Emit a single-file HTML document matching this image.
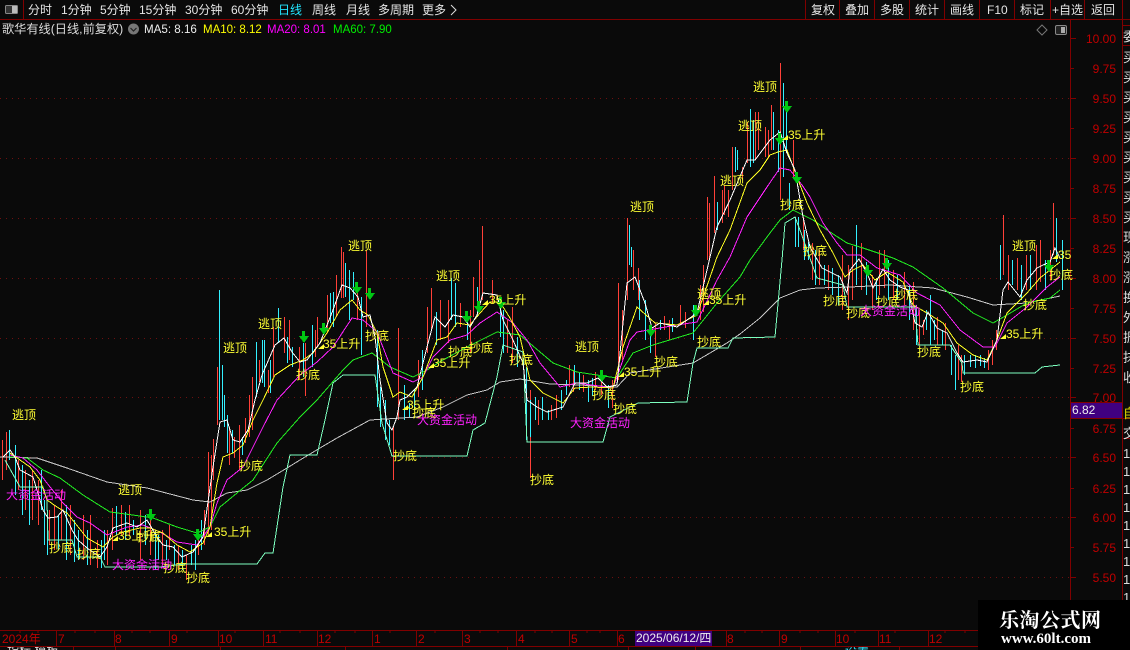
<!DOCTYPE html>
<html><head><meta charset="utf-8"><style>
html,body{margin:0;padding:0;background:#0a0a0a;width:1130px;height:650px;overflow:hidden}
svg{display:block}
text{font-family:"Liberation Sans","Noto Sans CJK SC",sans-serif}
.m{fill:#e6e6e6;font-size:12px}
.a{fill:#c00000;font-size:12px;text-anchor:end}
.d{fill:#c00000;font-size:12px}
.y{fill:#ffff33;font-size:12px}
.p{fill:#ff22ff;font-size:12px}
.r{fill:#e8e8e8;font-size:13px}
polyline{fill:none;stroke-width:1;shape-rendering:crispEdges}
</style></head><body>
<svg width="1130" height="650" viewBox="0 0 1130 650" xmlns="http://www.w3.org/2000/svg">
<rect width="1130" height="650" fill="#0a0a0a"/>
<!-- grid -->
<g stroke="#6e1010" stroke-width="1" stroke-dasharray="1 5" shape-rendering="crispEdges">
<path d="M0 98.500H1070M0 158.500H1070M0 218.500H1070M0 278.500H1070M0 338.500H1070M0 397.500H1070M0 457.500H1070M0 517.500H1070M0 577.500H1070"/>
</g>
<!-- frame -->
<g stroke="#800000" stroke-width="1" shape-rendering="crispEdges" fill="none">
<path d="M0 19.500H1130M23.500 0V19M805.500 0V19M839.500 0V19M874.500 0V19M909.500 0V19M944.500 0V19M979.500 0V19M1014.500 0V19M1050.500 0V19M1084.500 0V19M1122.500 0V19"/>
<path d="M1070.500 19V630M1122.500 19V650M1122 25.500H1130M1122 45.500H1130M1071 402.500H1122M1071 418.500H1130M1122 438.500H1130"/>
<path d="M0 630.500H1130M0 646.500H1130"/>
<path d="M1070 38.500H1076M1070 68.500H1074M1070 98.500H1076M1070 128.500H1074M1070 158.500H1076M1070 188.500H1074M1070 218.500H1076M1070 248.500H1074M1070 278.500H1076M1070 308.500H1074M1070 338.500H1076M1070 368.500H1074M1070 397.500H1076M1070 428.500H1074M1070 457.500H1076M1070 488.500H1074M1070 517.500H1076M1070 547.500H1074M1070 577.500H1076"/>
<path d="M56.500 630V646M114.500 630V646M169.500 630V646M218.500 630V646M263.500 630V646M317.500 630V646M372.500 630V646M416.500 630V646M462.500 630V646M516.500 630V646M569.500 630V646M617.500 630V646M726.500 630V646M779.500 630V646M835.500 630V646M878.500 630V646M928.500 630V646"/>
<path d="M73.500 646V650M115.500 646V650M220.500 646V650M345.500 646V650M507.500 646V650M628.500 646V650M695.500 646V650M800.500 646V650M899.500 646V650"/>
<path d="M20 630V633M38 630V633M75 630V633M95 630V633M132 630V633M150 630V633M187 630V633M235 630V633M280 630V633M300 630V633M335 630V633M355 630V633M390 630V633M435 630V633M480 630V633M498 630V633M535 630V633M552 630V633M587 630V633M600 630V633M745 630V633M762 630V633M800 630V633M818 630V633M855 630V633M895 630V633M945 630V633M965 630V633"/>
</g>
<!-- top bar -->
<g class="m">
<text class="m" x="28" y="14">分时</text><text class="m" x="61" y="14">1分钟</text><text class="m" x="100" y="14">5分钟</text><text class="m" x="139" y="14">15分钟</text><text class="m" x="185" y="14">30分钟</text><text class="m" x="231" y="14">60分钟</text>
<text x="278" y="14" style="font-size:12px;fill:#22e6ff">日线</text>
<text class="m" x="312" y="14">周线</text><text class="m" x="346" y="14">月线</text><text class="m" x="378" y="14">多周期</text><text class="m" x="422" y="14">更多</text>
<text class="m" x="811" y="14">复权</text><text class="m" x="845" y="14">叠加</text><text class="m" x="880" y="14">多股</text><text class="m" x="915" y="14">统计</text><text class="m" x="950" y="14">画线</text><text class="m" x="987" y="14">F10</text><text class="m" x="1020" y="14">标记</text><text class="m" x="1052" y="14">+自选</text><text class="m" x="1091" y="14">返回</text>
</g>
<path d="M451 5L456 10L451 15" fill="none" stroke="#ddd"/>
<rect x="5.500" y="5.500" width="12" height="8" rx="1" fill="#333" stroke="#888"/><rect x="12" y="6" width="5" height="7" fill="#bbb"/>
<!-- second row -->
<text x="2" y="33" style="font-size:12.200px;fill:#dcdcdc">歌华有线(日线,前复权)</text>
<circle cx="133.500" cy="29" r="5.500" fill="#777"/><path d="M130.500 28L133.500 31L136.500 28" fill="none" stroke="#222" stroke-width="1.200"/>
<text x="144" y="33" style="font-size:11.600px;fill:#eee">MA5: 8.16</text>
<text x="203" y="33" style="font-size:11.500px;fill:#ffff00">MA10: 8.12</text>
<text x="267" y="33" style="font-size:11.500px;fill:#ff00ff">MA20: 8.01</text>
<text x="333" y="33" style="font-size:11.500px;fill:#00ee00">MA60: 7.90</text>
<path d="M1042 25L1047 30L1042 35L1037 30Z" fill="none" stroke="#777"/>
<rect x="1055.500" y="25.500" width="11" height="9" rx="1.500" fill="#222" stroke="#888"/><rect x="1061" y="27" width="4" height="6" fill="#aaa"/>
<!-- axis labels -->
<g>
<text class="a" x="1116" y="43">10.00</text><text class="a" x="1116" y="73">9.75</text><text class="a" x="1116" y="103">9.50</text><text class="a" x="1116" y="133">9.25</text><text class="a" x="1116" y="163">9.00</text><text class="a" x="1116" y="193">8.75</text><text class="a" x="1116" y="223">8.50</text><text class="a" x="1116" y="253">8.25</text><text class="a" x="1116" y="283">8.00</text><text class="a" x="1116" y="313">7.75</text><text class="a" x="1116" y="343">7.50</text><text class="a" x="1116" y="373">7.25</text><text class="a" x="1116" y="402">7.00</text><text class="a" x="1116" y="433">6.75</text><text class="a" x="1116" y="462">6.50</text><text class="a" x="1116" y="493">6.25</text><text class="a" x="1116" y="522">6.00</text><text class="a" x="1116" y="552">5.75</text><text class="a" x="1116" y="582">5.50</text>
</g>
<rect x="1071" y="403" width="51" height="15" fill="#400080"/>
<text x="1072" y="414" style="font-size:12px;fill:#eee">6.82</text>
<!-- right panel clipped -->
<svg x="1123" y="20" width="7" height="610" viewBox="0 0 7 610">
<g style="font-size:13px;fill:#ddd">
<text x="0" y="21">委</text><text x="0" y="42">买</text><text x="0" y="62">买</text><text x="0" y="82">买</text><text x="0" y="102">买</text><text x="0" y="122">买</text><text x="0" y="142">买</text><text x="0" y="162">买</text><text x="0" y="182">买</text><text x="0" y="202">买</text><text x="0" y="222">现</text><text x="0" y="242">涨</text><text x="0" y="262">涨</text><text x="0" y="282">换</text><text x="0" y="302">外</text><text x="0" y="322">振</text><text x="0" y="342">抹</text><text x="0" y="362">收</text>
<text x="0" y="398" style="fill:#dddd00">自</text><text x="0" y="418">交</text>
<text x="0" y="438">1</text><text x="0" y="456">1</text><text x="0" y="474">1</text><text x="0" y="492">1</text><text x="0" y="510">1</text><text x="0" y="528">1</text><text x="0" y="546">1</text><text x="0" y="564">1</text><text x="0" y="582">1</text>
</g></svg>
<!-- date axis -->
<text class="d" x="2" y="643">2024年</text><text class="d" x="58" y="643">7</text><text class="d" x="115" y="643">8</text><text class="d" x="171" y="643">9</text><text class="d" x="219" y="643">10</text><text class="d" x="265" y="643">11</text><text class="d" x="318" y="643">12</text><text class="d" x="374" y="643">1</text><text class="d" x="418" y="643">2</text><text class="d" x="464" y="643">3</text><text class="d" x="518" y="643">4</text><text class="d" x="571" y="643">5</text><text class="d" x="618" y="643">6</text><text class="d" x="727" y="643">8</text><text class="d" x="781" y="643">9</text><text class="d" x="836" y="643">10</text><text class="d" x="879" y="643">11</text><text class="d" x="929" y="643">12</text>
<rect x="635" y="631" width="77" height="15" fill="#400080"/>
<text x="636" y="642" style="font-size:12px;fill:#eee">2025/06/12/四</text>
<!-- candles red -->
<path stroke="#ff4038" stroke-width="1" fill="none" shape-rendering="crispEdges" d="M2.500 440V480M6.500 432V470M18.500 460V490M25.500 470V510M32.500 470V520M38.500 480V525M49.500 510V545M54.500 505V550M61.500 490V540M70.500 505V555M83.500 515V560M90.500 515V565M97.500 540V568M107.500 530V565M112.500 508V550M121.500 505V535M129.500 505V535M140.500 510V560M150.500 520V555M162.500 530V565M169.500 525V550M178.500 545V570M186.500 555V580M198.500 535V555M204.500 510V545M208.500 452V535M211.500 455V530M213.500 439V480M217.500 367V425M229.500 427V465M234.500 437V458M239.500 425V470M245.500 418V443M249.500 395V437M252.500 377V430M259.500 360V382M268.500 370V393M273.500 327V377M284.500 317V353M289.500 320V360M299.500 347V380M305.500 343V396M315.500 330V357M317.500 317V347M327.500 295V333M336.500 275V317M341.500 247V298M343.500 252V298M357.500 290V320M366.500 250V327M393.500 427V480M398.500 328V420M418.500 360V397M427.500 307V353M431.500 288V330M440.500 300V340M448.500 300V343M460.500 303V327M470.500 310V353M473.500 277V317M479.500 260V303M482.500 226V300M492.500 280V303M507.500 320V353M512.500 307V363M530.500 390V478M538.500 400V425M551.500 405V420M556.500 395V418M569.500 365V387M573.500 370V392M583.500 375V392M595.500 372V390M601.500 378V395M612.500 380V408M618.500 283V380M622.500 310V360M627.500 218V300M633.500 250V290M638.500 268V300M655.500 323V357M664.500 316V330M669.500 320V340M680.500 305V325M685.500 312V328M700.500 285V320M703.500 265V312M707.500 197V260M709.500 203V258M714.500 176V233M722.500 190V223M724.500 185V215M728.500 190V217M732.500 147V190M742.500 167V180M747.500 122V163M755.500 112V160M758.500 112V150M765.500 127V157M768.500 130V157M771.500 105V150M780.500 63V200M793.500 140V177M803.500 217V250M812.500 243V280M819.500 250V285M828.500 265V290M842.500 255V310M848.500 265V320M852.500 246V300M861.500 243V290M872.500 275V310M879.500 250V295M884.500 250V288M893.500 270V300M904.500 272V305M913.500 282V330M919.500 310V345M923.500 320V335M937.500 317V345M945.500 323V350M958.500 345V380M961.500 355V382M988.500 350V370M992.500 340V365M996.500 330V350M1003.500 215V275M1008.500 255V290M1017.500 258V290M1026.500 255V290M1036.500 245V290M1040.500 240V282M1050.500 250V280M1053.500 203V255"/>
<!-- candles cyan -->
<path stroke="#33f0ff" stroke-width="1" fill="none" shape-rendering="crispEdges" d="M9.500 430V460M15.500 445V495M22.500 465V515M29.500 480V525M41.500 470V510M44.500 500V545M47.500 510V555M58.500 515V550M66.500 505V560M74.500 520V562M78.500 530V560M87.500 530V565M101.500 540V568M104.500 530V560M116.500 506V535M125.500 512V540M133.500 520V535M145.500 515V545M155.500 530V570M158.500 535V560M166.500 540V560M174.500 545V565M182.500 550V570M191.500 545V565M195.500 540V570M201.500 520V550M219.500 290V420M222.500 365V420M224.500 395V427M227.500 415V453M232.500 430V453M242.500 437V455M256.500 342V397M262.500 340V383M264.500 340V387M270.500 360V393M278.500 308V343M287.500 337V363M292.500 347V367M303.500 343V377M312.500 325V367M330.500 293V323M333.500 292V327M345.500 263V297M349.500 270V320M353.500 272V300M361.500 297V355M377.500 330V407M380.500 387V427M385.500 400V440M389.500 420V445M404.500 385V420M409.500 403V417M414.500 390V410M422.500 350V390M436.500 312V345M451.500 278V320M455.500 283V327M467.500 313V340M477.500 287V317M500.500 303V337M503.500 310V353M517.500 337V367M526.500 367V440M530.500 400V437M535.500 397V420M542.500 397V420M548.500 410V420M561.500 390V410M566.500 380V395M574.500 365V385M579.500 372V390M588.500 380V402M592.500 378V396M608.500 385V408M631.500 247V267M629.500 225V265M639.500 280V320M645.500 300V340M650.500 327V353M660.500 320V330M672.500 318V332M693.500 305V340M717.500 202V230M735.500 147V172M737.500 150V170M750.500 109V167M753.500 120V163M773.500 112V150M778.500 130V172M783.500 83V177M786.500 110V153M789.500 183V210M795.500 217V247M798.500 217V247M804.500 230V260M808.500 242V260M815.500 250V285M824.500 265V285M832.500 268V295M838.500 275V305M856.500 225V285M866.500 262V295M876.500 278V300M888.500 260V300M897.500 275V300M909.500 285V320M916.500 305V345M926.500 310V330M930.500 295V345M934.500 320V340M942.500 330V345M951.500 345V375M955.500 355V390M964.500 355V375M970.500 355V367M975.500 355V368M980.500 355V366M984.500 358V368M1000.500 245V280M1012.500 260V285M1021.500 265V300M1030.500 255V290M1045.500 260V290M1056.500 218V262M1062.500 240V290"/>
<!-- lines -->
<polyline stroke="#c8c8c8" points="0,457 37,458 67,468 107,482 147,488 193,500 210,502 227,493 247,490 267,480 287,468 300,460 320,448 337,438 370,420 417,417 443,407 467,395 487,390 500,382 520,379 550,384 580,385 617,387 630,373 693,363 727,343 740,334 760,318 780,298 800,290 817,288 850,287 890,285 933,288 967,297 993,305 1027,303 1060,296"/>
<polyline stroke="#7dffc0" points="5,460 20,487 43,487 47,500 48,540 72,540 77,557 100,557 105,567 160,567 185,564 257,564 265,553 273,553 283,487 290,455 317,455 325,420 333,383 343,375 375,375 382,423 392,456 467,456 473,430 485,423 497,377 503,345 523,352 527,442 603,442 610,417 638,403 687,402 693,363 697,348 728,348 733,338 775,337 782,260 785,223 795,217 800,230 817,278 843,285 847,307 915,307 918,345 950,345 962,363 963,373 1035,373 1042,367 1060,365"/>
<polyline stroke="#22ee22" points="10,457 27,458 43,470 60,478 83,495 110,512 133,515 153,518 177,527 197,533 210,527 220,507 237,493 253,480 277,443 300,417 317,400 343,370 353,360 372,353 390,367 413,377 427,370 443,360 467,347 497,332 520,335 553,363 577,372 617,378 633,353 653,345 693,333 717,303 740,277 750,260 770,233 780,220 793,210 813,220 830,232 847,243 863,248 893,258 913,267 943,288 973,313 993,323 1007,315 1027,303 1050,298 1060,290"/>
<polyline stroke="#ff22ff" points="10,455 23,458 37,470 50,487 63,503 77,517 90,523 107,535 127,527 143,525 160,532 177,542 197,545 210,527 217,503 227,480 243,467 263,427 277,400 300,375 317,362 333,347 352,318 363,320 377,332 393,373 413,382 423,377 433,357 450,340 467,335 480,323 497,312 513,323 527,340 540,363 560,387 577,383 613,388 630,340 637,332 677,325 697,322 717,280 730,257 747,217 767,187 780,168 790,170 802,185 810,197 823,223 837,243 847,255 860,255 877,268 900,275 917,293 940,305 960,330 983,347 995,347 1007,323 1027,307 1047,287 1060,277"/>
<polyline stroke="#ffff22" points="10,453 20,460 30,467 40,480 47,500 57,507 67,513 75,523 87,538 103,547 113,537 123,532 140,528 150,528 163,533 177,545 190,552 203,543 210,527 217,483 223,457 233,453 243,445 253,420 263,400 275,375 290,365 303,360 313,353 327,333 340,310 352,300 360,310 368,315 377,333 383,367 393,397 400,392 412,397 423,377 437,340 447,337 457,323 470,325 480,313 490,302 500,302 510,318 520,337 530,380 543,393 563,403 575,388 592,387 613,388 623,347 637,307 655,323 677,325 697,315 717,257 730,230 747,183 760,170 770,155 778,152 787,150 797,177 807,203 820,230 833,253 845,277 853,270 863,265 875,280 887,272 903,282 913,305 927,313 943,323 957,343 973,355 987,360 997,340 1007,313 1027,293 1040,278 1060,262"/>
<polyline stroke="#ffffff" points="3,457 10,450 15,457 20,470 33,477 43,510 48,518 57,517 63,510 72,530 78,540 87,548 100,557 107,547 113,528 127,523 137,527 147,520 157,537 163,545 173,547 182,557 193,552 203,537 213,467 220,422 227,420 233,440 240,442 248,430 255,400 262,375 275,345 284,338 292,352 300,362 307,360 320,343 333,310 342,285 350,288 358,297 363,317 370,315 375,337 380,380 387,423 392,430 397,417 400,400 407,397 417,387 427,347 435,317 445,327 453,315 463,317 470,327 477,315 483,293 497,295 503,320 513,340 523,363 527,400 537,407 547,412 563,407 575,383 587,383 598,378 607,387 617,385 622,333 627,283 635,277 645,303 652,328 660,323 677,327 697,313 707,270 717,227 730,200 747,160 755,160 770,140 780,132 787,153 795,170 803,217 810,247 822,268 832,273 840,277 847,293 850,270 859,259 867,273 873,288 883,269 890,280 900,287 908,290 915,323 922,327 928,312 937,328 947,333 957,353 963,362 977,360 987,362 997,340 1003,290 1008,282 1020,297 1027,280 1037,268 1043,265 1050,262 1055,248 1060,258"/>
<!-- arrows -->
<g fill="#00c814" shape-rendering="crispEdges">
<path d="M149 509h3v5h4l-5 7l-5-7h3zM196 529h3v5h4l-5 7l-5-7h3zM302 331h3v5h4l-5 7l-5-7h3zM322 323h3v5h4l-5 7l-5-7h3zM355 282h3v5h4l-5 7l-5-7h3zM368 288h3v5h4l-5 7l-5-7h3zM465 311h3v5h4l-5 7l-5-7h3zM477 301h3v5h4l-5 7l-5-7h3zM499 297h3v5h4l-5 7l-5-7h3zM600 370h3v5h4l-5 7l-5-7h3zM649 325h3v5h4l-5 7l-5-7h3zM694 305h3v5h4l-5 7l-5-7h3zM778 133h3v5h4l-5 7l-5-7h3zM785 101h3v5h4l-5 7l-5-7h3zM795 172h3v5h4l-5 7l-5-7h3zM866 265h3v5h4l-5 7l-5-7h3zM885 258h3v5h4l-5 7l-5-7h3zM1047 260h3v5h4l-5 7l-5-7h3z"/>
</g>
<!-- small rise marks -->
<path fill="#ffff33" d="M112 541l6-5v5zM206 537l6-5v5zM318 349l6-5v5zM402 410l6-5v5zM428 368l6-5v5zM482 305l6-5v5zM618 377l6-5v5zM703 305l6-5v5zM782 140l6-5v5zM1000 339l6-5v5zM1052 259l6-5v5z"/>
<!-- labels -->
<g>
<text class="y" x="12" y="419">逃顶</text><text class="y" x="118" y="494">逃顶</text><text class="y" x="223" y="352">逃顶</text><text class="y" x="258" y="328">逃顶</text><text class="y" x="348" y="250">逃顶</text><text class="y" x="436" y="280">逃顶</text><text class="y" x="575" y="351">逃顶</text><text class="y" x="630" y="211">逃顶</text><text class="y" x="697" y="298">逃顶</text><text class="y" x="720" y="185">逃顶</text><text class="y" x="738" y="130">逃顶</text><text class="y" x="753" y="91">逃顶</text><text class="y" x="1012" y="250">逃顶</text>
<text class="y" x="49" y="552">抄底</text><text class="y" x="77" y="558">抄底</text><text class="y" x="137" y="541">抄底</text><text class="y" x="163" y="572">抄底</text><text class="y" x="186" y="582">抄底</text><text class="y" x="239" y="470">抄底</text><text class="y" x="296" y="379">抄底</text><text class="y" x="365" y="340">抄底</text><text class="y" x="393" y="460">抄底</text><text class="y" x="412" y="417">抄底</text><text class="y" x="448" y="356">抄底</text><text class="y" x="469" y="352">抄底</text><text class="y" x="509" y="364">抄底</text><text class="y" x="530" y="484">抄底</text><text class="y" x="592" y="399">抄底</text><text class="y" x="613" y="413">抄底</text><text class="y" x="654" y="366">抄底</text><text class="y" x="697" y="346">抄底</text><text class="y" x="780" y="209">抄底</text><text class="y" x="803" y="255">抄底</text><text class="y" x="823" y="305">抄底</text><text class="y" x="846" y="317">抄底</text><text class="y" x="876" y="306">抄底</text><text class="y" x="894" y="299">抄底</text><text class="y" x="917" y="356">抄底</text><text class="y" x="960" y="391">抄底</text><text class="y" x="1023" y="309">抄底</text><text class="y" x="1049" y="279">抄底</text>
<text class="p" x="6" y="499">大资金活动</text><text class="p" x="112" y="569">大资金活动</text><text class="p" x="417" y="424">大资金活动</text><text class="p" x="570" y="427">大资金活动</text><text class="p" x="860" y="315">大资金活动</text>
<text class="y" x="118" y="540">35上升</text><text class="y" x="214" y="536">35上升</text><text class="y" x="323" y="348">35上升</text><text class="y" x="407" y="409">35上升</text><text class="y" x="433" y="367">35上升</text><text class="y" x="489" y="304">35上升</text><text class="y" x="624" y="376">35上升</text><text class="y" x="709" y="304">35上升</text><text class="y" x="788" y="139">35上升</text><text class="y" x="1006" y="338">35上升</text><text class="y" x="1058" y="259">35</text>
</g>
<!-- bottom row clipped -->
<svg x="0" y="647" width="978" height="3" viewBox="0 0 978 3">
<text x="7" y="8" style="font-size:12px;fill:#ddd">指标 模板</text>
<text x="845" y="8" style="font-size:12px;fill:#33e6ff">设置</text>
</svg>
<!-- watermark -->
<rect x="978" y="600" width="152" height="50" fill="#000"/>
<text x="999" y="627" style="font-size:20px;font-weight:bold;fill:#fff;font-family:'Liberation Serif','Noto Serif CJK SC',serif;letter-spacing:.5px">乐淘公式网</text>
<text x="1001" y="643" style="font-size:15px;font-weight:bold;fill:#fff;font-family:'Liberation Serif',serif">www.60lt.com</text>
</svg>
</body></html>
